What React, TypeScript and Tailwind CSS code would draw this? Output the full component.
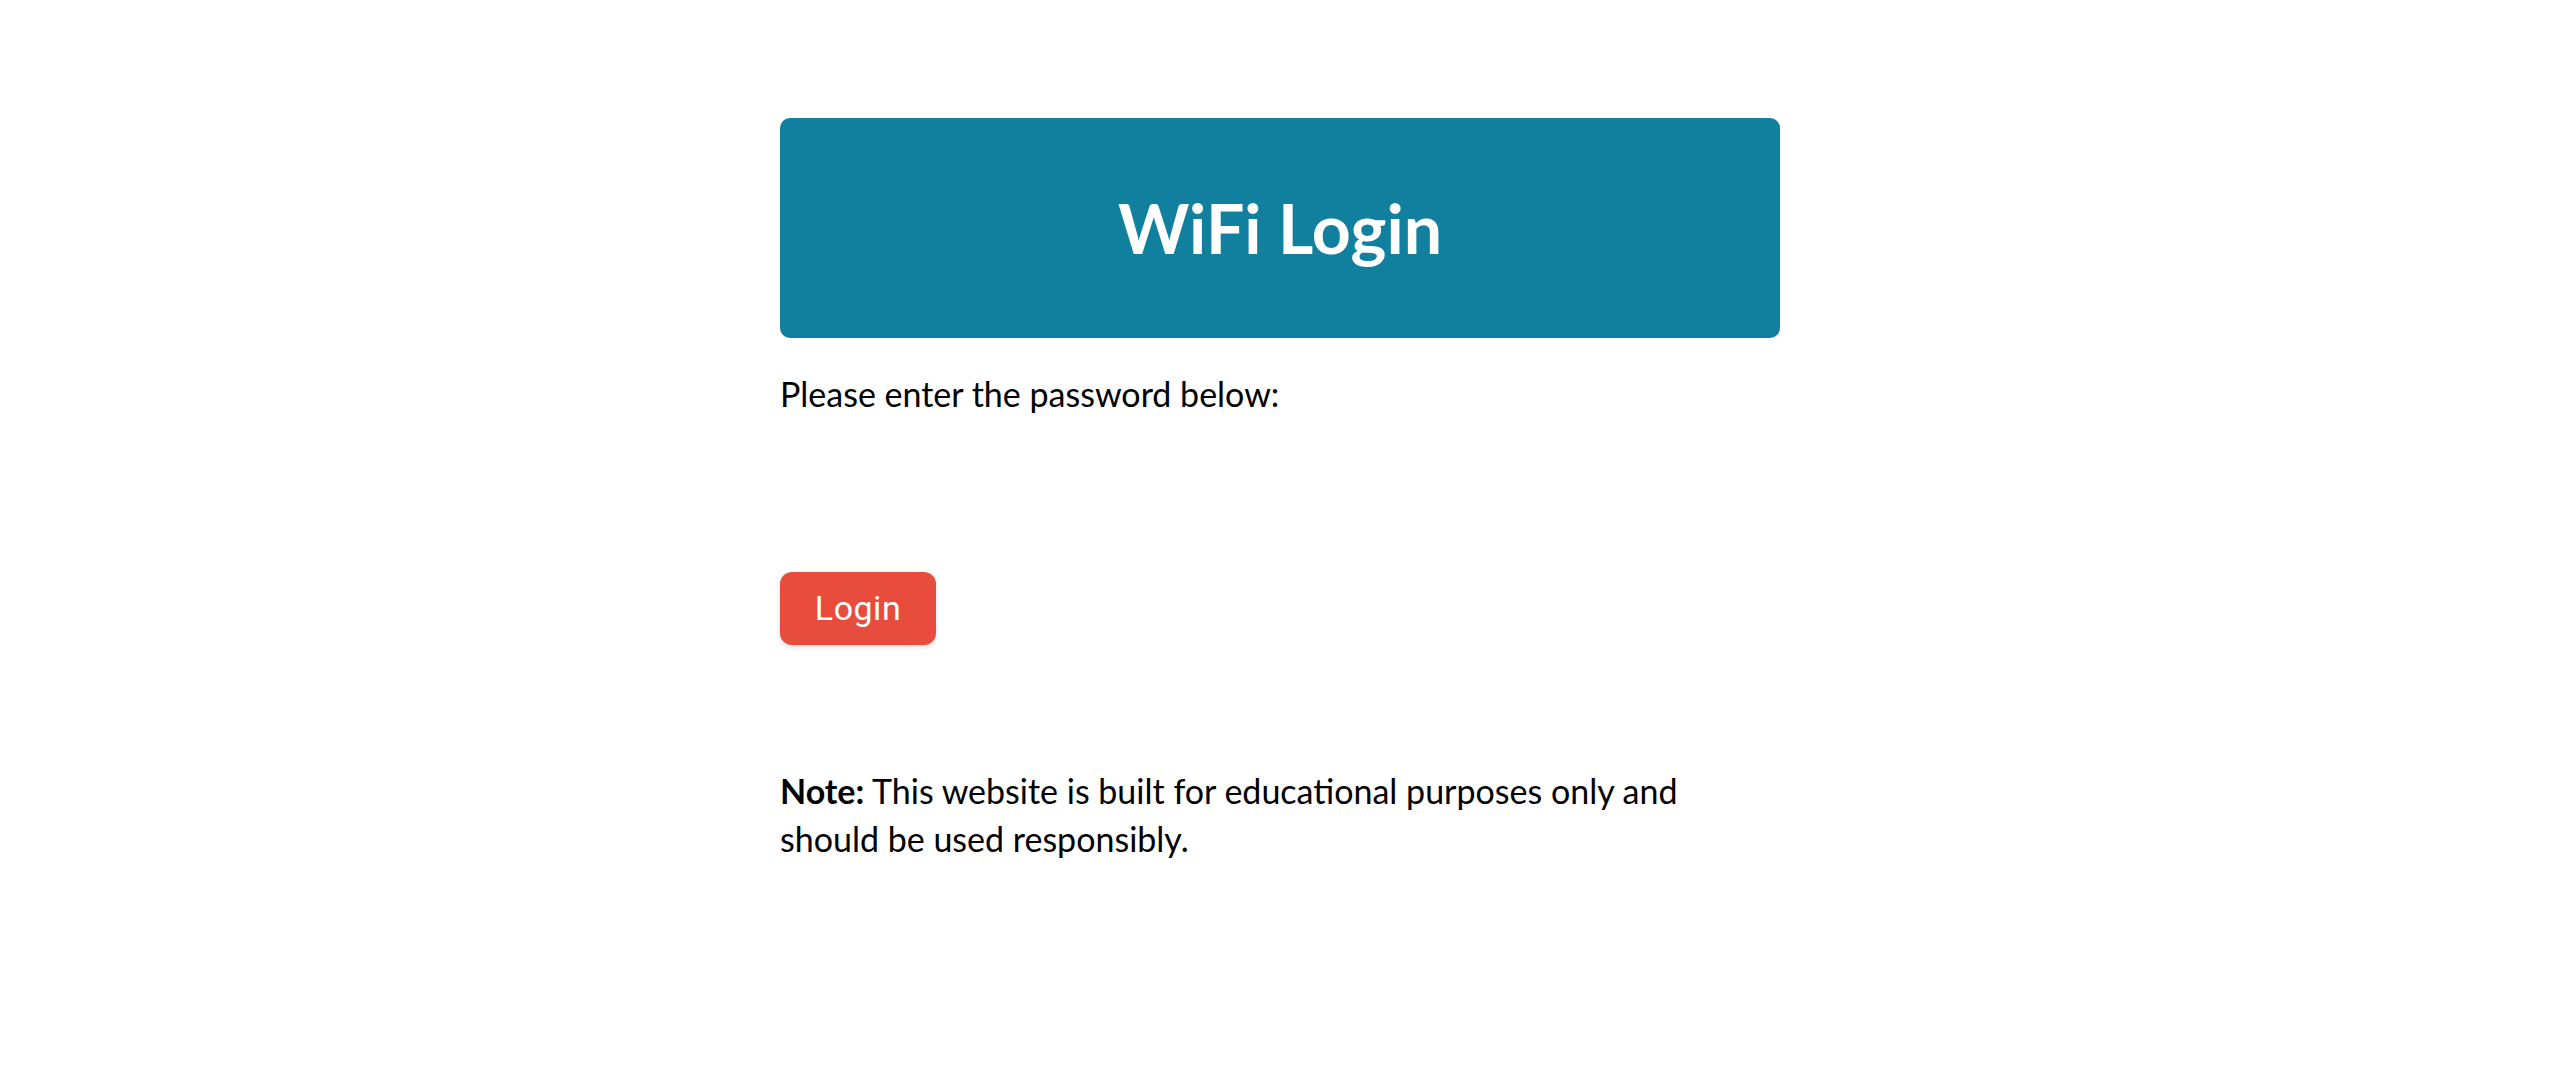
import React from 'react';

const App = () => {
  return (
    <div className="min-h-screen bg-white font-['Lato',sans-serif] text-black">
      <div className="mx-auto w-[1000px] pt-[118px]">
        {/* Header banner */}
        <div className="flex h-[220px] items-center justify-center rounded-[10px] bg-[#117f9e]">
          <h1 className="text-[68px] font-bold leading-none text-white">WiFi Login</h1>
        </div>

        <p className="mt-[32px] text-[34px] leading-[47px]">Please enter the password below:</p>

        {/* password field is invisible in the original */}
        <div className="h-[155px]" />

        <button className="h-[73px] w-[156px] rounded-[12px] bg-[#e74c3c] font-['Roboto',sans-serif] text-[34px] tracking-[0.5px] text-white shadow-[0_2px_4px_rgba(0,0,0,0.15)]">
          Login
        </button>

        <p className="mt-[122px] text-[34px] leading-[48px]">
          <span className="font-bold">Note:</span> This website is built for educational purposes only and should be used
          responsibly.
        </p>
      </div>
    </div>
  );
};

export default App;
